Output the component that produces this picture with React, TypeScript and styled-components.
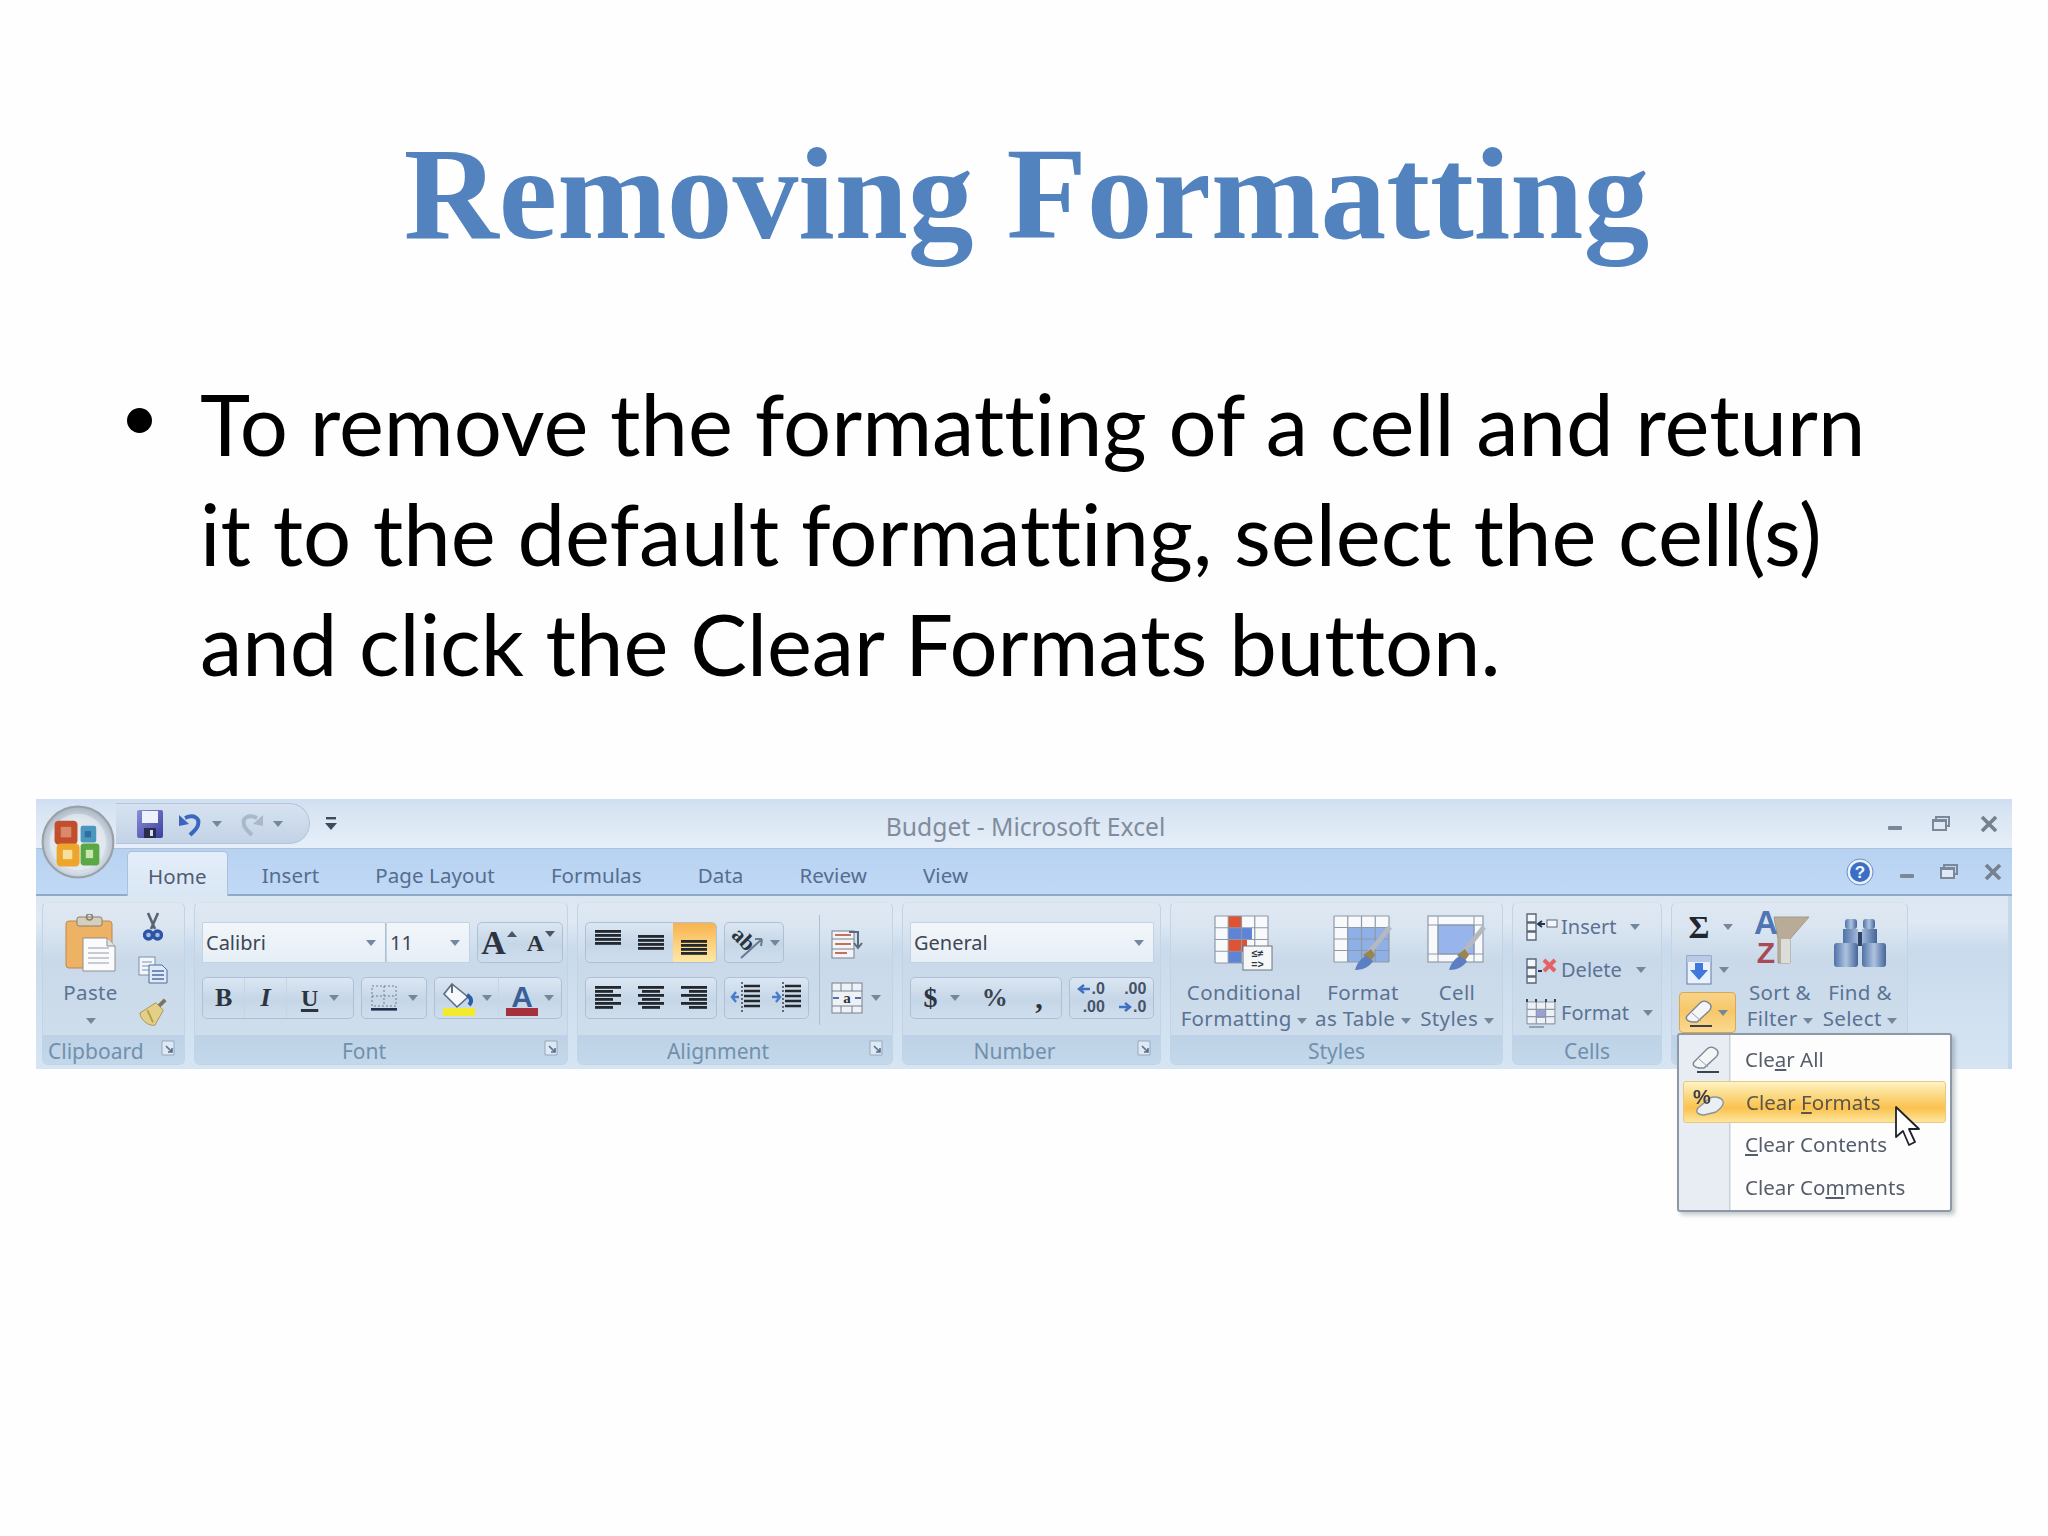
import React from "react";
import styled, { createGlobalStyle } from "styled-components";

const Global = createGlobalStyle`
  html, body { margin: 0; padding: 0; background: #fefefe; }
  #root { width: 2048px; height: 1536px; overflow: hidden; }
`;

const UI = `"Noto Sans", "Open Sans", sans-serif`;
const SERIF = `"Liberation Serif", serif`;

const Slide = styled.main`
  width: 2048px;
  height: 1536px;
  padding-top: 119px;
  box-sizing: border-box;
  background: #fefefe;
`;
const Title = styled.h1`
  margin: 0;
  padding-left: 5px;
  font: 700 131.5px/150px ${SERIF};
  color: #5283bf;
  text-align: center;
`;
const BulletList = styled.ul`
  list-style: none;
  margin: 99px 0 0;
  padding: 0 148px 0 200px;
  font: 400 85px/110px Lato, sans-serif;
  font-variant-ligatures: none;
  color: #000;
`;
const BulletItem = styled.li`
  position: relative;
  &::before {
    content: "";
    position: absolute;
    left: -73px;
    top: 40px;
    width: 25px;
    height: 25px;
    border-radius: 50%;
    background: #000;
  }
`;
const Ribbon = styled.section`
  position: relative;
  width: 1976px;
  margin: 101px 0 0 36px;
  font-family: ${UI};
  filter: blur(0.55px);
`;
const TitleBar = styled.header`
  height: 50px;
  display: grid;
  grid-template-columns: 1fr auto 1fr;
  align-items: center;
  background: linear-gradient(#cfdff2 0%, #d9e5f3 30%, #e6eff9 100%);
  border-bottom: 1px solid #aec3da;
  box-sizing: border-box;
`;
const Orb = styled.div`
  position: absolute;
  left: 5px;
  top: 6px;
  width: 74px;
  height: 74px;
  z-index: 3;
`;
const QuickAccess = styled.div`
  margin-left: 80px;
  display: flex;
  align-items: center;
  gap: 14px;
`;
const QatPill = styled.div`
  width: 194px;
  height: 41px;
  box-sizing: border-box;
  display: flex;
  align-items: center;
  padding-left: 20px;
  background: linear-gradient(#d6e2f0, #c3d3e6);
  border: 1px solid #b3c5da;
  border-left: none;
  border-radius: 0 22px 22px 0 / 0 22px 22px 0;
`;
const QatSlot = styled.span<{ $ml: number }>`
  flex: none;
  display: flex;
  margin-left: ${(p) => p.$ml}px;
`;
const AppTitle = styled.div`
  font-size: 24.7px;
  color: #808c9d;
  white-space: nowrap;
  padding-top: 5px;
  padding-left: 3px;
`;
const WinControls = styled.div<{ $gap: number; $right?: number }>`
  justify-self: end;
  display: flex;
  align-items: center;
  gap: ${(p) => p.$gap}px;
  margin-right: ${(p) => p.$right ?? 14}px;
`;
const TabRow = styled.nav`
  height: 47px;
  display: flex;
  align-items: flex-end;
  gap: 12px;
  padding-left: 91px;
  box-sizing: border-box;
  background: linear-gradient(#b7d2f1, #c0d9f6);
  border-bottom: 2px solid #8eacc9;
`;
const Tab = styled.div<{ $active?: boolean }>`
  height: 43px;
  padding: 4px 22px 0;
  display: flex;
  align-items: center;
  font-size: 20.5px;
  letter-spacing: 0.1px;
  box-sizing: border-box;
  color: ${(p) => (p.$active ? "#4f5d73" : "#556d90")};
  ${(p) =>
    p.$active
      ? `background: linear-gradient(#e4eefa, #d9e6f4); border: 1px solid #a9c1da; border-bottom: none; border-radius: 5px 5px 0 0; margin-bottom:-2px; height:45px; padding: 4px 20px 0;`
      : ""}
`;
const TabControls = styled(WinControls)`
  margin-left: auto;
  align-self: center;
  height: 47px;
`;
const Panel = styled.div`
  height: 173px;
  display: flex;
  gap: 9px;
  padding: 6px 0 4px 6px;
  box-sizing: border-box;
  background: linear-gradient(#dbe6f3 0%, #dfe9f4 14%, #c8daec 32%, #cfdfef 60%, #d6e5f3 100%);
  border-right: 4px solid #c3d8ec;
`;
const Group = styled.div<{ $w: number }>`
  width: ${(p) => p.$w}px;
  display: flex;
  flex-direction: column;
  box-sizing: border-box;
  border: 1px solid #c2d3e4;
  border-top-color: #d4e0ec;
  border-radius: 6px;
  background: linear-gradient(#dfe8f2 0%, #dae5f1 15%, #c9d9e9 36%, #d1dfed 100%);
  overflow: hidden;
`;
const GroupBody = styled.div`
  flex: 1;
  display: flex;
  min-height: 0;
`;
const GroupLabel = styled.div<{ $launcher?: boolean }>`
  position: relative;
  height: 29px;
  line-height: 29px;
  padding-top: 2px;
  text-align: center;
  box-sizing: border-box;
  padding-right: ${(p) => (p.$launcher ? 34 : 0)}px;
  font-size: 21px;
  color: #7290ae;
  background: linear-gradient(#bdd2e6, #c3d8ea);
`;
const LabelLeft = styled(GroupLabel)`
  text-align: left;
  padding: 2px 0 0 5px;
`;
const Launcher = styled.span`
  position: absolute;
  right: 9px;
  top: 5px;
  display: flex;
`;
const Column = styled.div<{ $pl?: number; $pt?: number; $w?: number; $gap?: number }>`
  display: flex;
  flex-direction: column;
  padding-left: ${(p) => p.$pl ?? 0}px;
  padding-top: ${(p) => p.$pt ?? 0}px;
  gap: ${(p) => p.$gap ?? 0}px;
  ${(p) => (p.$w ? `width: ${p.$w}px;` : "")}
  box-sizing: border-box;
  flex: none;
`;
const ToolRow = styled.div<{ $gap?: number; $h?: number }>`
  display: flex;
  gap: ${(p) => p.$gap ?? 7}px;
  height: ${(p) => p.$h ?? 41}px;
`;
const Combo = styled.div<{ $w: number; $joined?: boolean }>`
  width: ${(p) => p.$w}px;
  box-sizing: border-box;
  display: flex;
  align-items: center;
  justify-content: space-between;
  padding: 0 9px 0 3px;
  font-size: 20px;
  color: #3d4653;
  background: linear-gradient(#f2f6fa, #e6eef6);
  border: 1px solid #c4d3e3;
  ${(p) => (p.$joined ? "margin-right: -7px; border-right-color: #aebfd1;" : "")}
  border-radius: 2px;
`;
const ButtonBox = styled.div<{ $w: number }>`
  width: ${(p) => p.$w}px;
  box-sizing: border-box;
  display: flex;
  align-items: stretch;
  border: 1px solid #adc0d5;
  border-radius: 5px;
  background: linear-gradient(#dbe6f2, #c5d6e7 55%, #cfdeed);
`;
const Cell = styled.div<{ $flex?: number; $hot?: boolean; $divide?: boolean }>`
  flex: ${(p) => p.$flex ?? 1};
  display: flex;
  align-items: center;
  justify-content: center;
  gap: 5px;
  min-width: 0;
  ${(p) => (p.$divide ? "border-right: 1px solid #c6d5e4;" : "")}
  ${(p) => (p.$hot ? "background: linear-gradient(#f9b24d, #fcd27e 55%, #fde7a6); border-radius: 0 4px 4px 0;" : "")}
`;
const Caret = styled.span<{ $ml?: number }>`
  display: inline-block;
  flex: none;
  width: 0;
  height: 0;
  border-left: 5px solid transparent;
  border-right: 5px solid transparent;
  border-top: 6px solid #75879c;
  margin-left: ${(p) => p.$ml ?? 0}px;
  vertical-align: middle;
`;
const SizeArrow = styled.span<{ $up?: boolean }>`
  flex: none;
  align-self: flex-start;
  margin: 8px 0 0 -4px;
  width: 0;
  height: 0;
  border-left: 5px solid transparent;
  border-right: 5px solid transparent;
  ${(p) => (p.$up ? "border-bottom: 6px solid #4a5668;" : "border-top: 6px solid #4a5668;")}
`;
const SerifGlyph = styled.span<{ $size: number; $color?: string; $italic?: boolean; $under?: boolean }>`
  font: ${(p) => (p.$italic ? "italic " : "")}700 ${(p) => p.$size}px/1 ${SERIF};
  color: ${(p) => p.$color ?? "#2c3440"};
  ${(p) => (p.$under ? "text-decoration: underline; text-decoration-thickness: 3px; text-underline-offset: 3px;" : "")}
`;
const DecimalStack = styled.span`
  display: flex;
  flex-direction: column;
  align-items: flex-end;
  font: 700 16px/18px "Liberation Sans", sans-serif;
  color: #44536a;
  white-space: nowrap;
`;
const DecimalLine = styled.span`
  display: flex;
  align-items: center;
  gap: 1px;
`;
const Separator = styled.div`
  width: 1px;
  height: 110px;
  margin: 12px 0 0 10px;
  background: #aebfd2;
  flex: none;
`;
const LargeIconCol = styled.div`
  display: flex;
  flex-direction: column;
  padding-left: 11px;
  padding-top: 21px;
  gap: 18px;
`;
const IconWithCaret = styled.div`
  display: flex;
  align-items: center;
  height: 37px;
  gap: 8px;
  justify-content: flex-start;
`;
const BigButton = styled.div<{ $w: number }>`
  width: ${(p) => p.$w}px;
  flex: none;
  display: flex;
  flex-direction: column;
  align-items: center;
`;
const BigIcon = styled.div`
  height: 76px;
  display: flex;
  align-items: center;
  justify-content: center;
  padding-top: 3px;
  box-sizing: border-box;
`;
const BigLabel = styled.div`
  font-size: 20.5px;
  letter-spacing: 0.35px;
  line-height: 26px;
  color: #5a7294;
  text-align: center;
  white-space: nowrap;
`;
const StackRow = styled.div<{ $w?: number; $hot?: boolean }>`
  height: 43px;
  display: flex;
  align-items: center;
  font-size: 20px;
  color: #5a7294;
  box-sizing: border-box;
  ${(p) => (p.$w ? `width: ${p.$w}px;` : "")}
  ${(p) =>
    p.$hot
      ? `background: linear-gradient(#f8d48a, #f7c768 45%, #fbd98f); border: 1px solid #d8a955; border-radius: 4px; height: 41px; margin-top: 1px;`
      : ""}
`;
const StackIcon = styled.span<{ $w: number }>`
  width: ${(p) => p.$w}px;
  flex: none;
  display: flex;
  justify-content: center;
  align-items: center;
`;
const PasteLabel = styled(BigLabel)`
  line-height: 26px;
`;
const Menu = styled.div`
  position: absolute;
  left: 1641px;
  top: 234px;
  width: 275px;
  height: 179px;
  box-sizing: border-box;
  padding-top: 3px;
  background: linear-gradient(90deg, #e8edf3 0, #e8edf3 50px, #c9d1da 50px, #c9d1da 51px, #fdfdfd 52px);
  border: 2px solid #8d99a6;
  border-radius: 3px;
  box-shadow: 3px 3px 4px rgba(90, 100, 110, 0.35);
  z-index: 4;
`;
const MenuItem = styled.div<{ $hot?: boolean }>`
  height: 42.5px;
  display: flex;
  align-items: center;
  font-size: 20.5px;
  color: #555d6b;
  box-sizing: border-box;
  ${(p) =>
    p.$hot
      ? `background: linear-gradient(#fff3c4 0%, #fbdc8a 30%, #fbc24f 65%, #fde59c 100%); border: 1px solid #e4c987; border-radius: 3px; margin: 0 4px; color: #5c5647;`
      : ""}
`;
const MenuIcon = styled.span<{ $ml?: number }>`
  width: ${(p) => 66 - (p.$ml ?? 0)}px;
  flex: none;
  display: flex;
  padding-left: ${(p) => 12 - (p.$ml ?? 0)}px;
  box-sizing: border-box;
`;
const Cursor = styled.div`
  position: absolute;
  left: 1859px;
  top: 307px;
  z-index: 5;
  display: flex;
`;
const SortSvg = styled.svg`
  margin-top: -9px;
`;

/* ---------- drawn icons ---------- */
const OfficeOrb = () => (
  <svg width="74" height="74" viewBox="0 0 71 71">
    <defs>
      <radialGradient id="orbBg" cx="50%" cy="55%" r="55%">
        <stop offset="0%" stopColor="#f8f4ea" />
        <stop offset="70%" stopColor="#d3dde8" />
        <stop offset="100%" stopColor="#a7b3bf" />
      </radialGradient>
    </defs>
    <circle cx="35.5" cy="35.5" r="34" fill="url(#orbBg)" stroke="#9aa0a6" strokeWidth="2" />
    <circle cx="35.5" cy="35.5" r="27" fill="#e9eef2" opacity="0.55" />
    <rect x="13" y="15" width="22" height="23" rx="4" fill="#c14f2d" />
    <rect x="19" y="21" width="10" height="10" fill="#d98a6a" />
    <rect x="15" y="37" width="22" height="22" rx="4" fill="#eda52b" />
    <rect x="21" y="43" width="9" height="9" fill="#f8df9e" />
    <rect x="38" y="20" width="15" height="16" rx="2" fill="#4d97bf" />
    <rect x="42" y="25" width="6" height="6" fill="#2f6f9d" />
    <rect x="38" y="37" width="18" height="21" rx="3" fill="#5aa843" />
    <rect x="43" y="43" width="7" height="8" fill="#c8e7ae" />
  </svg>
);
const SaveIcon = () => (
  <svg width="28" height="30" viewBox="0 0 28 30">
    <defs>
      <linearGradient id="sv" x1="0" y1="0" x2="1" y2="1">
        <stop offset="0" stopColor="#8a8fd8" />
        <stop offset="1" stopColor="#3a3f9f" />
      </linearGradient>
    </defs>
    <rect x="1" y="1" width="26" height="28" rx="2" fill="url(#sv)" />
    <rect x="6" y="2" width="16" height="12" fill="#eef2fa" />
    <rect x="8" y="19" width="12" height="10" fill="#282c4d" />
    <rect x="14" y="21" width="3" height="6" fill="#d8dcef" />
  </svg>
);
const UndoIcon = ({ color = "#3a66bf", flip = false }: { color?: string; flip?: boolean }) => (
  <svg width="26" height="28" viewBox="0 0 26 28">
    <g transform={flip ? "translate(26 0) scale(-1 1)" : undefined}>
      <path d="M8 8 C 17 4, 23 8, 21 15 C 20 19, 16 22, 13 25" fill="none" stroke={color} strokeWidth="4" />
      <path d="M2 5 L2 16 L12 14 Z" fill={color} />
    </g>
  </svg>
);
const CustomizeIcon = () => (
  <svg width="14" height="16" viewBox="0 0 14 16">
    <rect x="2" y="1" width="10" height="2.4" fill="#3e4a5a" />
    <path d="M1 7 H13 L7 14 Z" fill="#3e4a5a" />
  </svg>
);
const Minimize = ({ w = 14 }: { w?: number }) => (
  <svg width={w} height="14" viewBox={`0 0 ${w} 14`}>
    <rect x="0" y="9" width={w} height="4" rx="1" fill="#7a8898" />
  </svg>
);
const Restore = () => (
  <svg width="18" height="15" viewBox="0 0 18 15">
    <rect x="4" y="1" width="13" height="9" fill="none" stroke="#7a8898" strokeWidth="2" />
    <rect x="1" y="4" width="13" height="10" fill="#dfe8f3" stroke="#7a8898" strokeWidth="2" />
    <rect x="1" y="3" width="13" height="3" fill="#7a8898" />
  </svg>
);
const CloseX = () => (
  <svg width="18" height="16" viewBox="0 0 18 16">
    <path d="M2 1 L16 15 M16 1 L2 15" stroke="#76818e" strokeWidth="3.6" />
  </svg>
);
const HelpIcon = () => (
  <svg width="28" height="28" viewBox="0 0 28 28">
    <circle cx="14" cy="14" r="13" fill="#eaf1fb" stroke="#6c8fc9" />
    <circle cx="14" cy="14" r="10" fill="#3c6fc4" />
    <text x="14" y="20" textAnchor="middle" fontFamily="Liberation Sans" fontWeight="700" fontSize="17" fill="#f1f5fc">?</text>
  </svg>
);
const LauncherIcon = () => (
  <svg width="14" height="16" viewBox="0 0 14 16">
    <path d="M1 1 H13 V15 H1 Z" fill="#dfe9f3" stroke="#95a8bc" />
    <path d="M5 6 L11 12 M11 8 V12 H7" stroke="#54708f" strokeWidth="1.6" fill="none" />
  </svg>
);
const PasteIcon = () => (
  <svg width="52" height="58" viewBox="0 0 52 58">
    <rect x="1" y="7" width="46" height="47" rx="3" fill="#eeb265" stroke="#b98a4d" />
    <rect x="12" y="3" width="25" height="9" rx="2" fill="#d6cfc0" stroke="#8d7f6a" />
    <circle cx="24.5" cy="3" r="3" fill="none" stroke="#8d7f6a" strokeWidth="1.5" />
    <path d="M18 24 H42 L50 32 V57 H18 Z" fill="#fbfbfb" stroke="#8e8e8e" />
    <path d="M42 24 V32 H50" fill="#dfe4ea" stroke="#8e8e8e" />
    <path d="M23 34 H44 M23 39 H44 M23 44 H44 M23 49 H44" stroke="#b5bdc8" strokeWidth="1.6" />
  </svg>
);
const Scissors = () => (
  <svg width="20" height="30" viewBox="0 0 20 30">
    <path d="M5 1 L12 17 M15 1 L8 17" stroke="#59636f" strokeWidth="2.6" />
    <circle cx="5.5" cy="23" r="4" fill="#a8bedc" stroke="#2c54a8" strokeWidth="3.4" />
    <circle cx="14.5" cy="23" r="4" fill="#a8bedc" stroke="#2c54a8" strokeWidth="3.4" />
  </svg>
);
const CopyIcon = () => (
  <svg width="30" height="28" viewBox="0 0 30 28">
    <rect x="1" y="1" width="16" height="18" fill="#f3f6fa" stroke="#7e8fa5" />
    <path d="M4 6 H14 M4 10 H14 M4 14 H14" stroke="#7c93b5" />
    <path d="M11 9 H24 L29 14 V27 H11 Z" fill="#dfe8f4" stroke="#4d6f9f" />
    <path d="M14 15 H26 M14 19 H26 M14 23 H26" stroke="#4a6fa8" strokeWidth="1.6" />
  </svg>
);
const BrushIcon = () => (
  <svg width="32" height="32" viewBox="0 0 32 32">
    <path d="M22 9 L29 2" stroke="#7d7362" strokeWidth="4" />
    <path d="M19 5 L27 13 L18 29 C 11 30, 3 24, 2 16 Z" fill="#e4cf87" stroke="#a7925a" />
    <path d="M10 13 L16 26" stroke="#b69c55" strokeWidth="2" />
  </svg>
);
const BordersIcon = () => (
  <svg width="28" height="28" viewBox="0 0 28 28">
    <path d="M2 2 H26 V22 H2 Z M2 12 H26 M14 2 V22" fill="none" stroke="#6f7c8d" strokeDasharray="2 2" />
    <rect x="1" y="24" width="26" height="2.6" fill="#1f2f4d" />
  </svg>
);
const FillIcon = () => (
  <svg width="36" height="36" viewBox="0 0 36 36">
    <path d="M11 4 L27 17 L16 27 L3 14 Z" fill="#f6f8fb" stroke="#5a6d84" strokeWidth="1.6" />
    <path d="M11 4 V13" stroke="#5a6d84" strokeWidth="2" />
    <path d="M26 15 C 31 18, 31 22, 28 25" stroke="#2c5ea8" strokeWidth="4" fill="none" />
    <rect x="2" y="28" width="32" height="8" fill="#f2ea2e" />
  </svg>
);
const FontColor = () => (
  <svg width="34" height="36" viewBox="0 0 34 36">
    <text x="17" y="27" textAnchor="middle" fontFamily="Liberation Sans" fontWeight="700" fontSize="30" fill="#3b5f97">A</text>
    <rect x="1" y="28" width="32" height="8" fill="#a5313c" />
  </svg>
);
type LineDef = [number, number, number];
const LinesIcon = ({ lines, w = 30, h = 28 }: { lines: LineDef[]; w?: number; h?: number }) => (
  <svg width={w} height={h} viewBox={`0 0 ${w} ${h}`}>
    {lines.map(([a, b, y]) => (
      <rect key={y} x={a} y={y} width={b - a} height="2.8" fill="#23272e" />
    ))}
  </svg>
);
const OrientIcon = () => (
  <svg width="36" height="38" viewBox="0 0 36 38">
    <path d="M12 34 L33 15 M33 15 L26 15 M33 15 L32 22" stroke="#6a7b90" strokeWidth="2" fill="none" />
    <g transform="rotate(45 14 16)">
      <text x="14" y="22" textAnchor="middle" fontFamily="Liberation Serif" fontWeight="700" fontSize="22" fill="#2a3340">ab</text>
    </g>
  </svg>
);
const IndentIcon = ({ flip = false }: { flip?: boolean }) => (
  <svg width="32" height="34" viewBox="0 0 32 34">
    <path d="M12 1 V33" stroke="#3b4350" strokeDasharray="2 2" strokeWidth="1.5" />
    <path d="M14 5 H30 M14 10 H30 M14 15 H30 M14 20 H30 M14 25 H30" stroke="#24282f" strokeWidth="2.5" />
    <path d={flip ? "M1 16 H8 M5 11 L9 16 L5 21" : "M9 16 H2 M6 11 L2 16 L6 21"} stroke="#4b7ccc" strokeWidth="2.4" fill="none" />
  </svg>
);
const WrapIcon = () => (
  <svg width="32" height="32" viewBox="0 0 32 32">
    <rect x="1" y="4" width="22" height="27" fill="#f2f4f8" stroke="#75808f" />
    <path d="M1 12 H23 M1 22 H23" stroke="#75808f" />
    <path d="M4 8 H20 M4 17 H20 M4 26 H16" stroke="#c6725a" strokeWidth="2" />
    <path d="M18 5 H27 V20 M23 16 L27 21 L31 16" stroke="#586a80" strokeWidth="2" fill="none" />
  </svg>
);
const MergeIcon = () => (
  <svg width="32" height="32" viewBox="0 0 32 32">
    <rect x="1" y="1" width="30" height="30" fill="#eef2f6" stroke="#75808f" />
    <path d="M1 9 H31 M1 24 H31 M10 1 V9 M21 1 V9 M10 24 V31 M21 24 V31" stroke="#75808f" />
    <text x="16" y="21" textAnchor="middle" fontFamily="Liberation Serif" fontWeight="700" fontSize="15" fill="#2c3440">a</text>
    <path d="M2 16 H8 M30 16 H24" stroke="#4f70a8" strokeWidth="2" />
  </svg>
);
const DecArrow = ({ right = false }: { right?: boolean }) => (
  <svg width="14" height="10" viewBox="0 0 14 10">
    <path d={right ? "M1 5 H11 M7 1 L12 5 L7 9" : "M13 5 H3 M7 1 L2 5 L7 9"} stroke="#3f6fc0" strokeWidth="2.4" fill="none" />
  </svg>
);
const gridLines = (x: number, y: number, cols: number, rows: number, cw: number, ch: number) => {
  const out: React.ReactElement[] = [];
  for (let c = 0; c <= cols; c++)
    out.push(<path key={`c${c}`} d={`M${x + c * cw} ${y} V${y + rows * ch}`} stroke="#8e99a8" strokeWidth="1.2" />);
  for (let r = 0; r <= rows; r++)
    out.push(<path key={`r${r}`} d={`M${x} ${y + r * ch} H${x + cols * cw}`} stroke="#8e99a8" strokeWidth="1.2" />);
  return out;
};
const Brush = () => (
  <g>
    <path d="M36 38 L57 12" stroke="#b4b9bf" strokeWidth="5" />
    <path d="M30 40 L38 34 L42 40 L37 47 Z" fill="#9a8450" />
    <path d="M22 55 C 24 47, 30 42, 33 41 L40 46 C 38 50, 32 55, 22 55 Z" fill="#5c7fc4" />
  </g>
);
const CondIcon = () => (
  <svg width="60" height="56" viewBox="0 0 60 56">
    <rect x="1" y="1" width="53" height="47" fill="#f7f9fb" />
    <rect x="14" y="1" width="13" height="12" fill="#df5233" />
    <rect x="14" y="13" width="24" height="12" fill="#5d84d6" />
    <rect x="14" y="25" width="19" height="12" fill="#df5233" />
    <rect x="14" y="37" width="13" height="11" fill="#5d84d6" />
    {gridLines(1, 1, 4, 4, 13.25, 11.75)}
    <rect x="29" y="31" width="29" height="24" fill="#f6f7f8" stroke="#6a7482" />
    <text x="43.5" y="42" textAnchor="middle" fontFamily="Liberation Sans" fontWeight="700" fontSize="10.5" fill="#2c3440">≤≠</text>
    <text x="43.5" y="53" textAnchor="middle" fontFamily="Liberation Sans" fontWeight="700" fontSize="10.5" fill="#2c3440">=&gt;</text>
  </svg>
);
const TableIcon = () => (
  <svg width="60" height="56" viewBox="0 0 60 56">
    <rect x="1" y="1" width="55" height="46" fill="#f7f9fb" />
    <rect x="14" y="13" width="42" height="34" fill="#8fb0e6" />
    {gridLines(1, 1, 4, 4, 13.75, 11.5)}
    <Brush />
  </svg>
);
const CellStyleIcon = () => (
  <svg width="60" height="56" viewBox="0 0 60 56">
    <rect x="1" y="1" width="55" height="46" fill="#f7f9fb" stroke="#8e99a8" strokeWidth="1.2" />
    <rect x="11" y="10" width="36" height="29" fill="#97b4ec" stroke="#8291b2" />
    <path d="M11 1 V47 M47 1 V47 M1 10 H56 M1 39 H56" stroke="#8e99a8" />
    <Brush />
  </svg>
);
const CellsInsert = () => (
  <svg width="32" height="28" viewBox="0 0 32 28">
    <path d="M1 1 H10 V9 H1 Z M1 10 H10 V18 H1 Z M1 19 H10 V27 H1 Z" fill="#f4f6f9" stroke="#59677a" strokeWidth="1.4" />
    <path d="M12 11 H19 M16 8 L12 11 L16 14" stroke="#24364f" strokeWidth="2" fill="none" />
    <rect x="21" y="7" width="10" height="7" fill="#f4f6f9" stroke="#59677a" />
  </svg>
);
const CellsDelete = () => (
  <svg width="32" height="28" viewBox="0 0 32 28">
    <path d="M1 3 H10 V11 H1 Z M1 12 H10 V20 H1 Z M1 21 H10 V27 H1 Z" fill="#f4f6f9" stroke="#59677a" strokeWidth="1.4" />
    <path d="M12 15 H16" stroke="#24364f" strokeWidth="2" />
    <path d="M18 4 L29 15 M29 4 L18 15" stroke="#e46262" strokeWidth="4" />
  </svg>
);
const CellsFormat = () => (
  <svg width="32" height="32" viewBox="0 0 32 32">
    <rect x="1" y="5" width="28" height="22" fill="#eef2f6" />
    <rect x="10" y="12" width="10" height="9" fill="#9aa0d6" />
    {gridLines(1, 5, 3, 3, 9.3, 7.3)}
    <path d="M1 2 V5 M10 2 V5 M20 2 V5 M29 2 V5" stroke="#3d4553" strokeWidth="2" />
    <path d="M3 30 H18" stroke="#59677a" />
  </svg>
);
const FillDown = () => (
  <svg width="26" height="30" viewBox="0 0 26 30">
    <rect x="1" y="1" width="24" height="28" fill="#eaf1fb" stroke="#5f7da8" />
    <rect x="1" y="1" width="24" height="6" fill="#b9cbe4" />
    <path d="M9 8 H17 V15 H22 L13 25 L4 15 H9 Z" fill="#3e78dc" />
  </svg>
);
const Eraser = ({ w = 30 }: { w?: number }) => (
  <svg width={w} height="28" viewBox="0 0 30 28">
    <path d="M3 17 L16 4 C 19 1, 23 2, 26 5 C 28 8, 27 10, 25 12 L13 23 L8 23 C 3 22, 1 20, 3 17 Z" fill="#f3f5f7" stroke="#7d8792" strokeWidth="1.4" />
    <path d="M8 14 L17 22" stroke="#96a0aa" />
    <path d="M6 27 H28" stroke="#3b4350" strokeWidth="2" />
  </svg>
);
const ClearFmt = () => (
  <svg width="34" height="32" viewBox="0 0 34 32">
    <path d="M6 22 L18 12 C 22 10, 29 11, 31 15 C 33 19, 28 23, 24 26 L12 29 C 6 29, 3 26, 6 22 Z" fill="#eceff2" stroke="#8a94a0" strokeWidth="1.4" />
    <text x="1" y="18" fontFamily="Liberation Sans" fontWeight="700" fontSize="20" fill="#3b3e44">%</text>
  </svg>
);
const SortIcon = () => (
  <SortSvg width="60" height="66" viewBox="0 0 60 66">
    <path d="M24 12 H59 L40 34 V58 H28 V34 Z" fill="#b8ac98" stroke="#a59a86" />
    <path d="M31 34 V58 H40 V34 Z" fill="#dcdcd8" />
    <text x="16" y="29" textAnchor="middle" fontFamily="Liberation Sans" fontWeight="700" fontSize="33" fill="#4e76b4">A</text>
    <text x="16" y="58" textAnchor="middle" fontFamily="Liberation Sans" fontWeight="700" fontSize="30" fill="#a84a56">Z</text>
  </SortSvg>
);
const Binoculars = () => (
  <svg width="54" height="50" viewBox="0 0 54 50">
    <defs>
      <linearGradient id="bin" x1="0" x2="1" y1="0" y2="0">
        <stop offset="0" stopColor="#4f72a9" />
        <stop offset=".5" stopColor="#aec3df" />
        <stop offset="1" stopColor="#44659b" />
      </linearGradient>
    </defs>
    <rect x="12" y="1" width="12" height="10" rx="3" fill="url(#bin)" />
    <rect x="30" y="1" width="12" height="10" rx="3" fill="url(#bin)" />
    <path d="M10 11 H25 V26 H10 Z M29 11 H44 V26 H29 Z" fill="url(#bin)" />
    <path d="M25 14 H29 V28 H25 Z" fill="#31456b" />
    <rect x="1" y="25" width="24" height="24" rx="3" fill="url(#bin)" />
    <rect x="29" y="25" width="24" height="24" rx="3" fill="url(#bin)" />
  </svg>
);
const Pointer = () => (
  <svg width="26" height="42" viewBox="0 0 26 42">
    <path d="M1 1 V31 L8 25 L14 39 L20 36 L14 23 L24 23 Z" fill="#fff" stroke="#1e232b" strokeWidth="1.8" strokeLinejoin="round" />
  </svg>
);

export default function App() {
  return (
    <Slide>
      <Global />
      <Title>Removing Formatting</Title>
      <BulletList>
        <BulletItem>
          To remove the formatting of a cell and return it to the default formatting, select the cell(s) and click the Clear Formats button.
        </BulletItem>
      </BulletList>
      <Ribbon>
        <Orb>
          <OfficeOrb />
        </Orb>
        <TitleBar>
          <QuickAccess>
            <QatPill>
              <SaveIcon />
              <QatSlot $ml={13}><UndoIcon /></QatSlot>
              <QatSlot $ml={9}><Caret /></QatSlot>
              <QatSlot $ml={17}><UndoIcon color="#a9b8cb" flip /></QatSlot>
              <QatSlot $ml={8}><Caret /></QatSlot>
            </QatPill>
            <CustomizeIcon />
          </QuickAccess>
          <AppTitle>Budget - Microsoft Excel</AppTitle>
          <WinControls $gap={30} $right={14}>
            <Minimize />
            <Restore />
            <CloseX />
          </WinControls>
        </TitleBar>
        <TabRow>
          <Tab $active>Home</Tab>
          <Tab>Insert</Tab>
          <Tab>Page Layout</Tab>
          <Tab>Formulas</Tab>
          <Tab>Data</Tab>
          <Tab>Review</Tab>
          <Tab>View</Tab>
          <TabControls $gap={26} $right={10}>
            <HelpIcon />
            <Minimize />
            <Restore />
            <CloseX />
          </TabControls>
        </TabRow>
        <Panel>
          <Group $w={143}>
            <GroupBody>
              <BigButton $w={95}>
                <BigIcon>
                  <PasteIcon />
                </BigIcon>
                <PasteLabel>Paste</PasteLabel>
                <PasteLabel>
                  <Caret />
                </PasteLabel>
              </BigButton>
              <Column $pt={2} $w={30}>
                <StackRow><StackIcon $w={30}><Scissors /></StackIcon></StackRow>
                <StackRow><StackIcon $w={30}><CopyIcon /></StackIcon></StackRow>
                <StackRow><StackIcon $w={30}><BrushIcon /></StackIcon></StackRow>
              </Column>
            </GroupBody>
            <LabelLeft>
              Clipboard
              <Launcher><LauncherIcon /></Launcher>
            </LabelLeft>
          </Group>
          <Group $w={374}>
            <GroupBody>
              <Column $pl={7} $pt={19} $gap={14}>
                <ToolRow>
                  <Combo $w={184} $joined>
                    Calibri
                    <Caret />
                  </Combo>
                  <Combo $w={84}>
                    11
                    <Caret />
                  </Combo>
                  <ButtonBox $w={86}>
                    <Cell>
                      <SerifGlyph $size={34}>A</SerifGlyph>
                      <SizeArrow $up />
                    </Cell>
                    <Cell>
                      <SerifGlyph $size={24}>A</SerifGlyph>
                      <SizeArrow />
                    </Cell>
                  </ButtonBox>
                </ToolRow>
                <ToolRow $h={42}>
                  <ButtonBox $w={152}>
                    <Cell $divide><SerifGlyph $size={26}>B</SerifGlyph></Cell>
                    <Cell $divide><SerifGlyph $size={26} $italic>I</SerifGlyph></Cell>
                    <Cell $flex={1.6}>
                      <SerifGlyph $size={24} $under>U</SerifGlyph>
                      <Caret $ml={6} />
                    </Cell>
                  </ButtonBox>
                  <ButtonBox $w={66}>
                    <Cell>
                      <BordersIcon />
                      <Caret $ml={5} />
                    </Cell>
                  </ButtonBox>
                  <ButtonBox $w={128}>
                    <Cell $divide>
                      <FillIcon />
                      <Caret />
                    </Cell>
                    <Cell>
                      <FontColor />
                      <Caret />
                    </Cell>
                  </ButtonBox>
                </ToolRow>
              </Column>
            </GroupBody>
            <GroupLabel $launcher>
              Font
              <Launcher><LauncherIcon /></Launcher>
            </GroupLabel>
          </Group>
          <Group $w={316}>
            <GroupBody>
              <Column $pl={7} $pt={19} $gap={14}>
                <ToolRow>
                  <ButtonBox $w={132}>
                    <Cell><LinesIcon lines={[[2, 28, 1], [2, 28, 5], [2, 28, 9], [2, 28, 13]]} /></Cell>
                    <Cell><LinesIcon lines={[[2, 28, 6], [2, 28, 10], [2, 28, 14], [2, 28, 18]]} /></Cell>
                    <Cell $hot><LinesIcon lines={[[2, 28, 11], [2, 28, 15], [2, 28, 19], [2, 28, 23]]} /></Cell>
                  </ButtonBox>
                  <ButtonBox $w={60}>
                    <Cell>
                      <OrientIcon />
                      <Caret />
                    </Cell>
                  </ButtonBox>
                </ToolRow>
                <ToolRow $h={42}>
                  <ButtonBox $w={132}>
                    <Cell><LinesIcon lines={[[2, 28, 2], [2, 20, 6], [2, 28, 10], [2, 20, 14], [2, 28, 18], [2, 20, 22]]} /></Cell>
                    <Cell><LinesIcon lines={[[2, 28, 2], [6, 24, 6], [2, 28, 10], [6, 24, 14], [2, 28, 18], [6, 24, 22]]} /></Cell>
                    <Cell><LinesIcon lines={[[2, 28, 2], [10, 28, 6], [2, 28, 10], [10, 28, 14], [2, 28, 18], [10, 28, 22]]} /></Cell>
                  </ButtonBox>
                  <ButtonBox $w={85}>
                    <Cell><IndentIcon /></Cell>
                    <Cell><IndentIcon flip /></Cell>
                  </ButtonBox>
                </ToolRow>
              </Column>
              <Separator />
              <LargeIconCol>
                <IconWithCaret><WrapIcon /></IconWithCaret>
                <IconWithCaret>
                  <MergeIcon />
                  <Caret />
                </IconWithCaret>
              </LargeIconCol>
            </GroupBody>
            <GroupLabel $launcher>
              Alignment
              <Launcher><LauncherIcon /></Launcher>
            </GroupLabel>
          </Group>
          <Group $w={259}>
            <GroupBody>
              <Column $pl={7} $pt={19} $gap={14}>
                <ToolRow>
                  <Combo $w={244}>
                    General
                    <Caret />
                  </Combo>
                </ToolRow>
                <ToolRow $h={42}>
                  <ButtonBox $w={152}>
                    <Cell $flex={1.4}>
                      <SerifGlyph $size={28}>$</SerifGlyph>
                      <Caret $ml={8} />
                    </Cell>
                    <Cell><SerifGlyph $size={26} $color="#3b4350">%</SerifGlyph></Cell>
                    <Cell><SerifGlyph $size={30}>,</SerifGlyph></Cell>
                  </ButtonBox>
                  <ButtonBox $w={85}>
                    <Cell>
                      <DecimalStack>
                        <DecimalLine><DecArrow />.0</DecimalLine>
                        <DecimalLine>.00</DecimalLine>
                      </DecimalStack>
                    </Cell>
                    <Cell>
                      <DecimalStack>
                        <DecimalLine>.00</DecimalLine>
                        <DecimalLine><DecArrow right />.0</DecimalLine>
                      </DecimalStack>
                    </Cell>
                  </ButtonBox>
                </ToolRow>
              </Column>
            </GroupBody>
            <GroupLabel $launcher>
              Number
              <Launcher><LauncherIcon /></Launcher>
            </GroupLabel>
          </Group>
          <Group $w={333}>
            <GroupBody>
              <Column $pl={5} />
              <BigButton $w={136}>
                <BigIcon><CondIcon /></BigIcon>
                <BigLabel>Conditional</BigLabel>
                <BigLabel>Formatting <Caret /></BigLabel>
              </BigButton>
              <BigButton $w={102}>
                <BigIcon><TableIcon /></BigIcon>
                <BigLabel>Format</BigLabel>
                <BigLabel>as Table <Caret /></BigLabel>
              </BigButton>
              <BigButton $w={86}>
                <BigIcon><CellStyleIcon /></BigIcon>
                <BigLabel>Cell</BigLabel>
                <BigLabel>Styles <Caret /></BigLabel>
              </BigButton>
            </GroupBody>
            <GroupLabel>Styles</GroupLabel>
          </Group>
          <Group $w={150}>
            <GroupBody>
              <Column $pl={10} $pt={2}>
                <StackRow><StackIcon $w={38}><CellsInsert /></StackIcon>Insert<Caret $ml={14} /></StackRow>
                <StackRow><StackIcon $w={38}><CellsDelete /></StackIcon>Delete<Caret $ml={14} /></StackRow>
                <StackRow><StackIcon $w={38}><CellsFormat /></StackIcon>Format<Caret $ml={14} /></StackRow>
              </Column>
            </GroupBody>
            <GroupLabel>Cells</GroupLabel>
          </Group>
          <Group $w={237}>
            <GroupBody>
              <Column $pl={7} $pt={2}>
                <StackRow $w={57}>
                  <StackIcon $w={40}><SerifGlyph $size={32} $color="#1f2630">Σ</SerifGlyph></StackIcon>
                  <Caret $ml={4} />
                </StackRow>
                <StackRow $w={57}>
                  <StackIcon $w={40}><FillDown /></StackIcon>
                  <Caret />
                </StackRow>
                <StackRow $w={57} $hot>
                  <StackIcon $w={38}><Eraser /></StackIcon>
                  <Caret />
                </StackRow>
              </Column>
              <Column $pl={7} />
              <BigButton $w={74}>
                <BigIcon><SortIcon /></BigIcon>
                <BigLabel>Sort &amp;</BigLabel>
                <BigLabel>Filter <Caret /></BigLabel>
              </BigButton>
              <BigButton $w={86}>
                <BigIcon><Binoculars /></BigIcon>
                <BigLabel>Find &amp;</BigLabel>
                <BigLabel>Select <Caret /></BigLabel>
              </BigButton>
            </GroupBody>
            <GroupLabel />
          </Group>
        </Panel>
        <Menu>
          <MenuItem>
            <MenuIcon><Eraser w={30} /></MenuIcon>
            <span>Cle<u>a</u>r All</span>
          </MenuItem>
          <MenuItem $hot>
            <MenuIcon $ml={4}><ClearFmt /></MenuIcon>
            <span>Clear <u>F</u>ormats</span>
          </MenuItem>
          <MenuItem>
            <MenuIcon />
            <span><u>C</u>lear Contents</span>
          </MenuItem>
          <MenuItem>
            <MenuIcon />
            <span>Clear Co<u>m</u>ments</span>
          </MenuItem>
        </Menu>
        <Cursor><Pointer /></Cursor>
      </Ribbon>
    </Slide>
  );
}
